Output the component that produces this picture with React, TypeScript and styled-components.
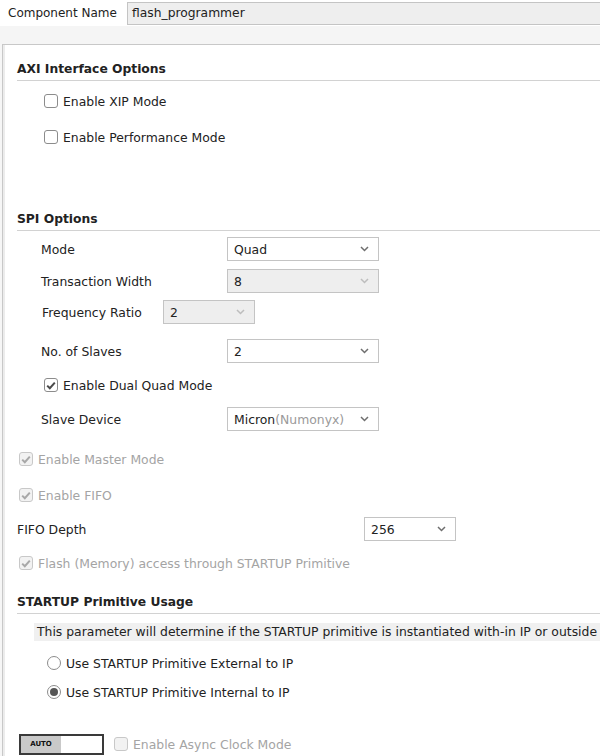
import React from "react";
import styled, { createGlobalStyle } from "styled-components";

const Global = createGlobalStyle`
  html, body { margin: 0; padding: 0; background: #ffffff; }
  body { font-family: "DejaVu Sans", "Noto Sans", sans-serif; font-size: 12px; color: #222; }
  * { box-sizing: border-box; }
`;

const Page = styled.div`
  width: 600px;
  height: 756px;
  overflow: hidden;
  background: #f6f6f6;
  display: flex;
  flex-direction: column;
`;

const NameRow = styled.div`
  height: 26px;
  padding-top: 2px;
  display: flex;
  align-items: flex-start;
  background: #ffffff;
`;

const NameLabel = styled.div`
  width: 127px;
  padding-left: 8px;
  line-height: 23px;
  color: #222;
`;

const NameInput = styled.div`
  flex: 1;
  height: 23px;
  line-height: 21px;
  padding-left: 4px;
  background: #eeeeee;
  border: 1px solid #c4c4c4;
  border-right: none;
  color: #222;
  font-size: 12.3px;
`;

const Spacer = styled.div`
  height: 18px;
  background: #f5f5f5;
`;

const Panel = styled.div`
  flex: 1;
  margin-left: 2px;
  background: #ffffff;
  border-top: 1px solid #c8c8c8;
  border-left: 1px solid #c8c8c8;
  box-shadow: inset 2px 0 0 #ececec;
  padding-left: 14px;
  display: flex;
  flex-direction: column;
  font-size: 12.4px;
`;

const Title = styled.div<{ $mt: number }>`
  margin-top: ${(p) => p.$mt}px;
  line-height: 18px;
  padding-bottom: 2px;
  font-weight: bold;
  font-size: 12.3px;
  color: #222;
  border-bottom: 1px solid #d2d2d2;
`;

const Row = styled.div<{ $mt: number; $indent: number; $h?: number }>`
  margin-top: ${(p) => p.$mt}px;
  padding-left: ${(p) => p.$indent}px;
  height: ${(p) => p.$h ?? 20}px;
  display: flex;
  align-items: center;
`;

const FieldLabel = styled.div<{ $w: number }>`
  width: ${(p) => p.$w}px;
  flex: none;
  color: #222;
`;

const SelectBox = styled.div<{ $w: number; $disabled?: boolean }>`
  width: ${(p) => p.$w}px;
  height: 24px;
  border: 1px solid #c4c4c4;
  background: ${(p) => (p.$disabled ? "#eeeeee" : "#ffffff")};
  display: flex;
  align-items: center;
  padding: 0 9px 0 6px;
  color: #222;
`;

const SelectText = styled.div`
  flex: 1;
  white-space: nowrap;
`;

const Muted = styled.span`
  color: #9a9a9a;
`;

const CheckLabel = styled.label<{ $disabled?: boolean }>`
  display: flex;
  align-items: center;
  gap: 5px;
  color: ${(p) => (p.$disabled ? "#a4a4a4" : "#222")};
  white-space: nowrap;
`;

const Box = styled.span<{ $disabled?: boolean }>`
  width: 14px;
  height: 14px;
  border-radius: 3px;
  border: 1px solid ${(p) => (p.$disabled ? "#c8c8c8" : "#8c8c8c")};
  background: ${(p) => (p.$disabled ? "#f2f2f2" : "#ffffff")};
  display: flex;
  align-items: center;
  justify-content: center;
  flex: none;
`;

const Radio = styled.span`
  width: 14px;
  height: 14px;
  border-radius: 50%;
  border: 1px solid #8c8c8c;
  background: #ffffff;
  display: flex;
  align-items: center;
  justify-content: center;
  flex: none;
`;

const Dot = styled.span`
  width: 8px;
  height: 8px;
  border-radius: 50%;
  background: #555;
`;

const Info = styled.div`
  margin-top: 9px;
  margin-left: 17px;
  height: 18px;
  line-height: 18px;
  padding-left: 3px;
  background: #f0f0f0;
  color: #222;
  white-space: nowrap;
  overflow: hidden;
`;

const AutoToggle = styled.div`
  width: 85px;
  height: 21px;
  border: 2px solid #3a3a3a;
  display: flex;
  margin-right: 10px;
`;

const AutoHalf = styled.div`
  width: 40px;
  background: #c9c9c9;
  display: flex;
  align-items: center;
  justify-content: center;
  font-size: 7px;
  font-weight: bold;
  color: #111;
`;

const Chevron = ({ disabled }: { disabled?: boolean }) => (
  <svg width="9" height="6" viewBox="0 0 9 6">
    <path d="M1 1 L4.5 4.5 L8 1" fill="none" stroke={disabled ? "#bdbdbd" : "#6e6e6e"} strokeWidth="1.5" />
  </svg>
);

const Check = ({ disabled }: { disabled?: boolean }) => (
  <svg width="10" height="9" viewBox="0 0 10 9">
    <path d="M1.2 4.6 L3.8 7.2 L8.8 1.6" fill="none" stroke={disabled ? "#a8a8a8" : "#4a4a4a"} strokeWidth="2" />
  </svg>
);

const CheckBox = ({ label, checked, disabled }: { label: string; checked?: boolean; disabled?: boolean }) => (
  <CheckLabel $disabled={disabled}>
    <Box $disabled={disabled}>{checked && <Check disabled={disabled} />}</Box>
    {label}
  </CheckLabel>
);

const Select = ({ w, disabled, children }: { w: number; disabled?: boolean; children: React.ReactNode }) => (
  <SelectBox $w={w} $disabled={disabled}>
    <SelectText>{children}</SelectText>
    <Chevron disabled={disabled} />
  </SelectBox>
);

export default function App() {
  return (
    <Page>
      <Global />
      <NameRow>
        <NameLabel>Component Name</NameLabel>
        <NameInput>flash_programmer</NameInput>
      </NameRow>
      <Spacer />
      <Panel>
        <Title $mt={15}>AXI Interface Options</Title>
        <Row $mt={10} $indent={27}>
          <CheckBox label="Enable XIP Mode" />
        </Row>
        <Row $mt={16} $indent={27}>
          <CheckBox label="Enable Performance Mode" />
        </Row>

        <Title $mt={63}>SPI Options</Title>
        <Row $mt={6} $indent={24} $h={24}>
          <FieldLabel $w={186}>Mode</FieldLabel>
          <Select w={152}>Quad</Select>
        </Row>
        <Row $mt={8} $indent={24} $h={24}>
          <FieldLabel $w={186}>Transaction Width</FieldLabel>
          <Select w={152} disabled>8</Select>
        </Row>
        <Row $mt={7} $indent={25} $h={24}>
          <FieldLabel $w={121}>Frequency Ratio</FieldLabel>
          <Select w={92} disabled>2</Select>
        </Row>
        <Row $mt={15} $indent={24} $h={24}>
          <FieldLabel $w={186}>No. of Slaves</FieldLabel>
          <Select w={152}>2</Select>
        </Row>
        <Row $mt={12} $indent={27}>
          <CheckBox label="Enable Dual Quad Mode" checked />
        </Row>
        <Row $mt={12} $indent={24} $h={24}>
          <FieldLabel $w={186}>Slave Device</FieldLabel>
          <Select w={152}>
            Micron<Muted>(Numonyx)</Muted>
          </Select>
        </Row>
        <Row $mt={18} $indent={2}>
          <CheckBox label="Enable Master Mode" checked disabled />
        </Row>
        <Row $mt={16} $indent={2}>
          <CheckBox label="Enable FIFO" checked disabled />
        </Row>
        <Row $mt={12} $indent={0} $h={24}>
          <FieldLabel $w={347}>FIFO Depth</FieldLabel>
          <Select w={92}>256</Select>
        </Row>
        <Row $mt={12} $indent={2}>
          <CheckBox label="Flash (Memory) access through STARTUP Primitive" checked disabled />
        </Row>

        <Title $mt={20}>STARTUP Primitive Usage</Title>
        <Info>This parameter will determine if the STARTUP primitive is instantiated with-in IP or outside</Info>
        <Row $mt={12} $indent={30}>
          <CheckLabel>
            <Radio />
            Use STARTUP Primitive External to IP
          </CheckLabel>
        </Row>
        <Row $mt={9} $indent={30}>
          <CheckLabel>
            <Radio>
              <Dot />
            </Radio>
            Use STARTUP Primitive Internal to IP
          </CheckLabel>
        </Row>
        <Row $mt={32} $indent={2}>
          <AutoToggle>
            <AutoHalf>AUTO</AutoHalf>
          </AutoToggle>
          <CheckBox label="Enable Async Clock Mode" disabled />
        </Row>
      </Panel>
    </Page>
  );
}
